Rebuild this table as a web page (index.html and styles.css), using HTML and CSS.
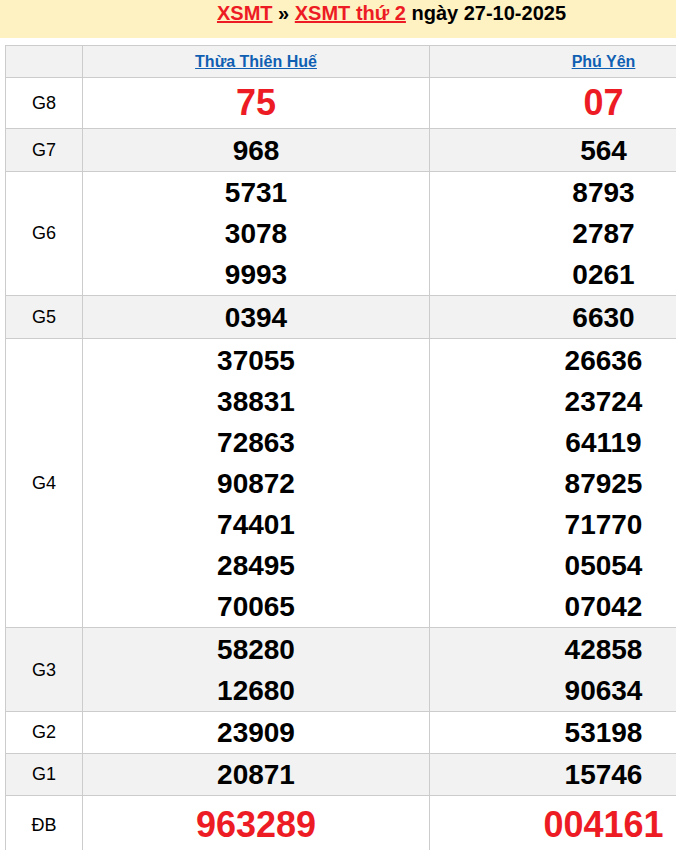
FILE: index.html
```html
<!DOCTYPE html>
<html lang="vi">
<head>
<meta charset="utf-8">
<title>XSMT thứ 2 ngày 27-10-2025</title>
<link rel="stylesheet" href="styles.css">
</head>
<body>
<div class="page">
  <h2 class="title">
    <a href="#" class="red-link">XSMT</a> » <a href="#" class="red-link">XSMT thứ 2</a> ngày 27-10-2025
  </h2>
  <table class="results">
    <colgroup>
      <col class="c-label">
      <col class="c-prov">
      <col class="c-prov2">
    </colgroup>
    <thead>
      <tr class="gray">
        <th></th>
        <th><a href="#" class="prov">Thừa Thiên Huế</a></th>
        <th><a href="#" class="prov">Phú Yên</a></th>
      </tr>
    </thead>
    <tbody>
      <tr class="big">
        <td class="label">G8</td>
        <td><div class="n red">75</div></td>
        <td><div class="n red">07</div></td>
      </tr>
      <tr class="gray">
        <td class="label">G7</td>
        <td><div class="n">968</div></td>
        <td><div class="n">564</div></td>
      </tr>
      <tr class="tight">
        <td class="label">G6</td>
        <td><div class="n">5731</div><div class="n">3078</div><div class="n">9993</div></td>
        <td><div class="n">8793</div><div class="n">2787</div><div class="n">0261</div></td>
      </tr>
      <tr class="gray">
        <td class="label">G5</td>
        <td><div class="n">0394</div></td>
        <td><div class="n">6630</div></td>
      </tr>
      <tr>
        <td class="label">G4</td>
        <td><div class="n">37055</div><div class="n">38831</div><div class="n">72863</div><div class="n">90872</div><div class="n">74401</div><div class="n">28495</div><div class="n">70065</div></td>
        <td><div class="n">26636</div><div class="n">23724</div><div class="n">64119</div><div class="n">87925</div><div class="n">71770</div><div class="n">05054</div><div class="n">07042</div></td>
      </tr>
      <tr class="gray">
        <td class="label">G3</td>
        <td><div class="n">58280</div><div class="n">12680</div></td>
        <td><div class="n">42858</div><div class="n">90634</div></td>
      </tr>
      <tr class="tight">
        <td class="label">G2</td>
        <td><div class="n">23909</div></td>
        <td><div class="n">53198</div></td>
      </tr>
      <tr class="gray tight">
        <td class="label">G1</td>
        <td><div class="n">20871</div></td>
        <td><div class="n">15746</div></td>
      </tr>
      <tr class="big db">
        <td class="label">ĐB</td>
        <td><div class="n red">963289</div></td>
        <td><div class="n red">004161</div></td>
      </tr>
    </tbody>
  </table>
</div>
</body>
</html>
```
FILE: styles.css
```css
html, body {
  margin: 0;
  padding: 0;
  overflow: hidden;
  background: #fff;
}

.page {
  width: 783px;
  font-family: "Liberation Sans", Arial, sans-serif;
  color: #000;
}

.title {
  margin: 0;
  height: 38px;
  box-sizing: border-box;
  padding-top: 2px;
  background: #fff2c2;
  text-align: center;
  font-size: 20px;
  line-height: 23px;
  font-weight: bold;
  color: #000;
}

.red-link {
  color: #ed1c24;
  text-decoration: underline;
}

.results {
  margin: 7px 0 0 5px;
  width: 773px;
  table-layout: fixed;
  border-collapse: separate;
  border-spacing: 0;
  border-top: 1px solid #cccccc;
  border-left: 1px solid #cccccc;
}

.c-label { width: 77px; }
.c-prov { width: 347px; }
.c-prov2 { width: 348px; }

.results th,
.results td {
  box-sizing: border-box;
  border-right: 1px solid #cccccc;
  border-bottom: 1px solid #cccccc;
  text-align: center;
  vertical-align: middle;
  padding: 1px 0 0;
}

.results th {
  height: 32px;
  padding: 0;
}

.results .tight td {
  padding: 0;
}

.gray th,
.gray td {
  background: #f2f2f2;
}

.prov {
  font-size: 16px;
  font-weight: bold;
  color: #0f5fb3;
  text-decoration: underline;
}

.label {
  font-size: 18px;
  color: #000;
}

.n {
  font-size: 28px;
  line-height: 41px;
  font-weight: bold;
  color: #000;
}

.results .big td {
  padding: 0;
}

.big .n {
  font-size: 36px;
  line-height: 50px;
}

.db .n {
  line-height: 58px;
}

.n.red {
  color: #ed1c24;
}
```
